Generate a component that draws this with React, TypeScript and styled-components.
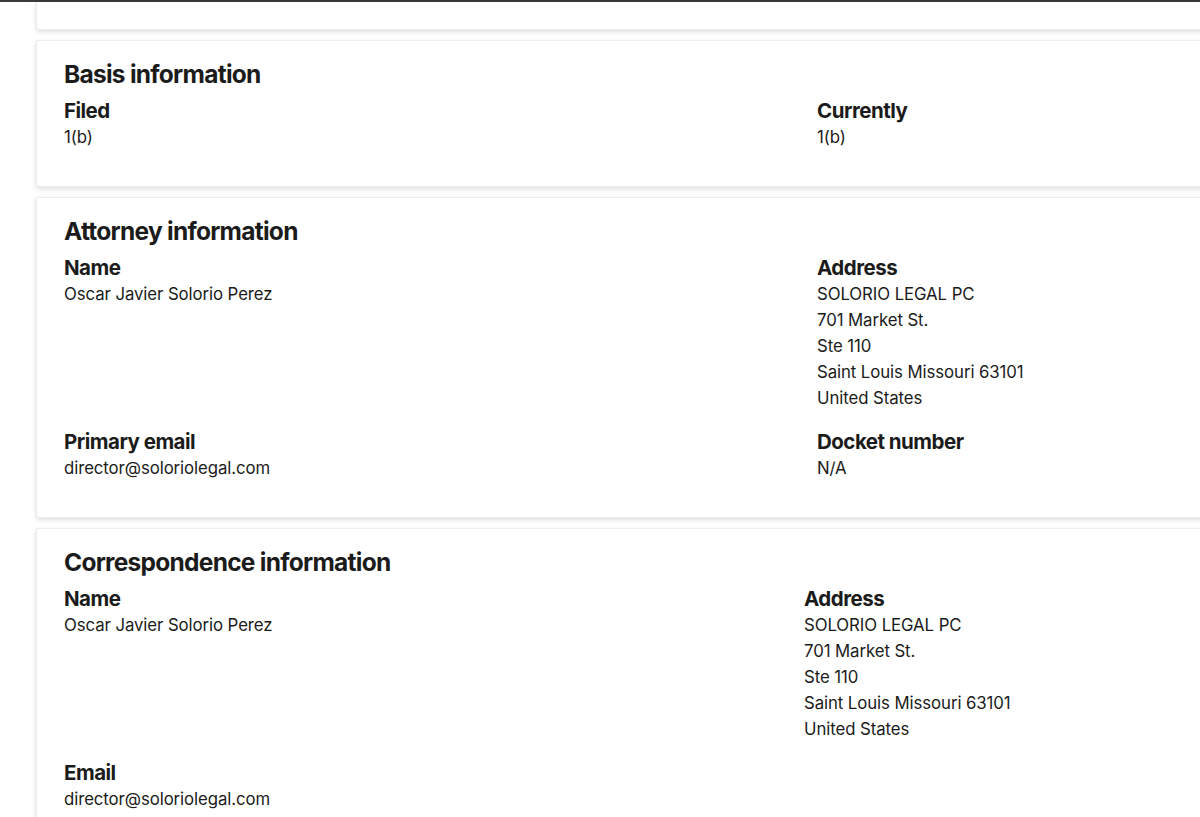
import React from "react";
import styled, { createGlobalStyle } from "styled-components";

const Global = createGlobalStyle`
  html, body {
    margin: 0;
    padding: 0;
    background: #ffffff;
    overflow: hidden;
  }
  body {
    font-family: Inter, "Noto Sans", "Liberation Sans", sans-serif;
    color: #1b1b1b;
  }
`;

const TopBar = styled.div`
  height: 2px;
  background: #3a3a3a;
`;

const Page = styled.div`
  display: flex;
  flex-direction: column;
  gap: 10px;
  padding-left: 36px;
  padding-bottom: 40px;
`;

const Card = styled.section<{ $clipped?: boolean }>`
  width: 1220px;
  box-sizing: border-box;
  background: #ffffff;
  border: 1px solid #ececec;
  border-top: ${(p) => (p.$clipped ? "none" : "1px solid #ececec")};
  border-radius: 0 0 3px 3px;
  box-shadow: 0 2px 5px rgba(0, 0, 0, 0.13);
  padding: ${(p) => (p.$clipped ? "0" : "18px 28px 36px 27px")};
  height: ${(p) => (p.$clipped ? "28px" : "auto")};
`;

const Heading = styled.h2`
  margin: 0 0 9px 0;
  font-size: 24.5px;
  line-height: 30px;
  font-weight: 700;
  letter-spacing: -0.03em;
`;

const Grid = styled.div<{ $firstCol: number }>`
  display: grid;
  grid-template-columns: ${(p) => p.$firstCol}px 1fr;
  row-gap: 18px;
`;

const Field = styled.div`
  display: flex;
  flex-direction: column;
`;

const Label = styled.div`
  font-size: 20.5px;
  line-height: 26px;
  font-weight: 700;
  letter-spacing: -0.025em;
`;

const Value = styled.div`
  font-size: 16.8px;
  line-height: 26px;
  font-weight: 400;
  letter-spacing: -0.005em;
`;

type F = { label: string; lines: string[] };

const Section: React.FC<{ title: string; firstCol: number; fields: F[] }> = ({
  title,
  firstCol,
  fields,
}) => (
  <Card>
    <Heading>{title}</Heading>
    <Grid $firstCol={firstCol}>
      {fields.map((f, i) => (
        <Field key={i}>
          <Label>{f.label}</Label>
          {f.lines.map((l, j) => (
            <Value key={j}>{l}</Value>
          ))}
        </Field>
      ))}
    </Grid>
  </Card>
);

const address = [
  "SOLORIO LEGAL PC",
  "701 Market St.",
  "Ste 110",
  "Saint Louis Missouri 63101",
  "United States",
];

export default function App() {
  return (
    <>
      <Global />
      <TopBar />
      <Page>
        <Card $clipped />
        <Section
          title="Basis information"
          firstCol={753}
          fields={[
            { label: "Filed", lines: ["1(b)"] },
            { label: "Currently", lines: ["1(b)"] },
          ]}
        />
        <Section
          title="Attorney information"
          firstCol={753}
          fields={[
            { label: "Name", lines: ["Oscar Javier Solorio Perez"] },
            { label: "Address", lines: address },
            { label: "Primary email", lines: ["director@soloriolegal.com"] },
            { label: "Docket number", lines: ["N/A"] },
          ]}
        />
        <Section
          title="Correspondence information"
          firstCol={740}
          fields={[
            { label: "Name", lines: ["Oscar Javier Solorio Perez"] },
            { label: "Address", lines: address },
            { label: "Email", lines: ["director@soloriolegal.com"] },
          ]}
        />
      </Page>
    </>
  );
}
